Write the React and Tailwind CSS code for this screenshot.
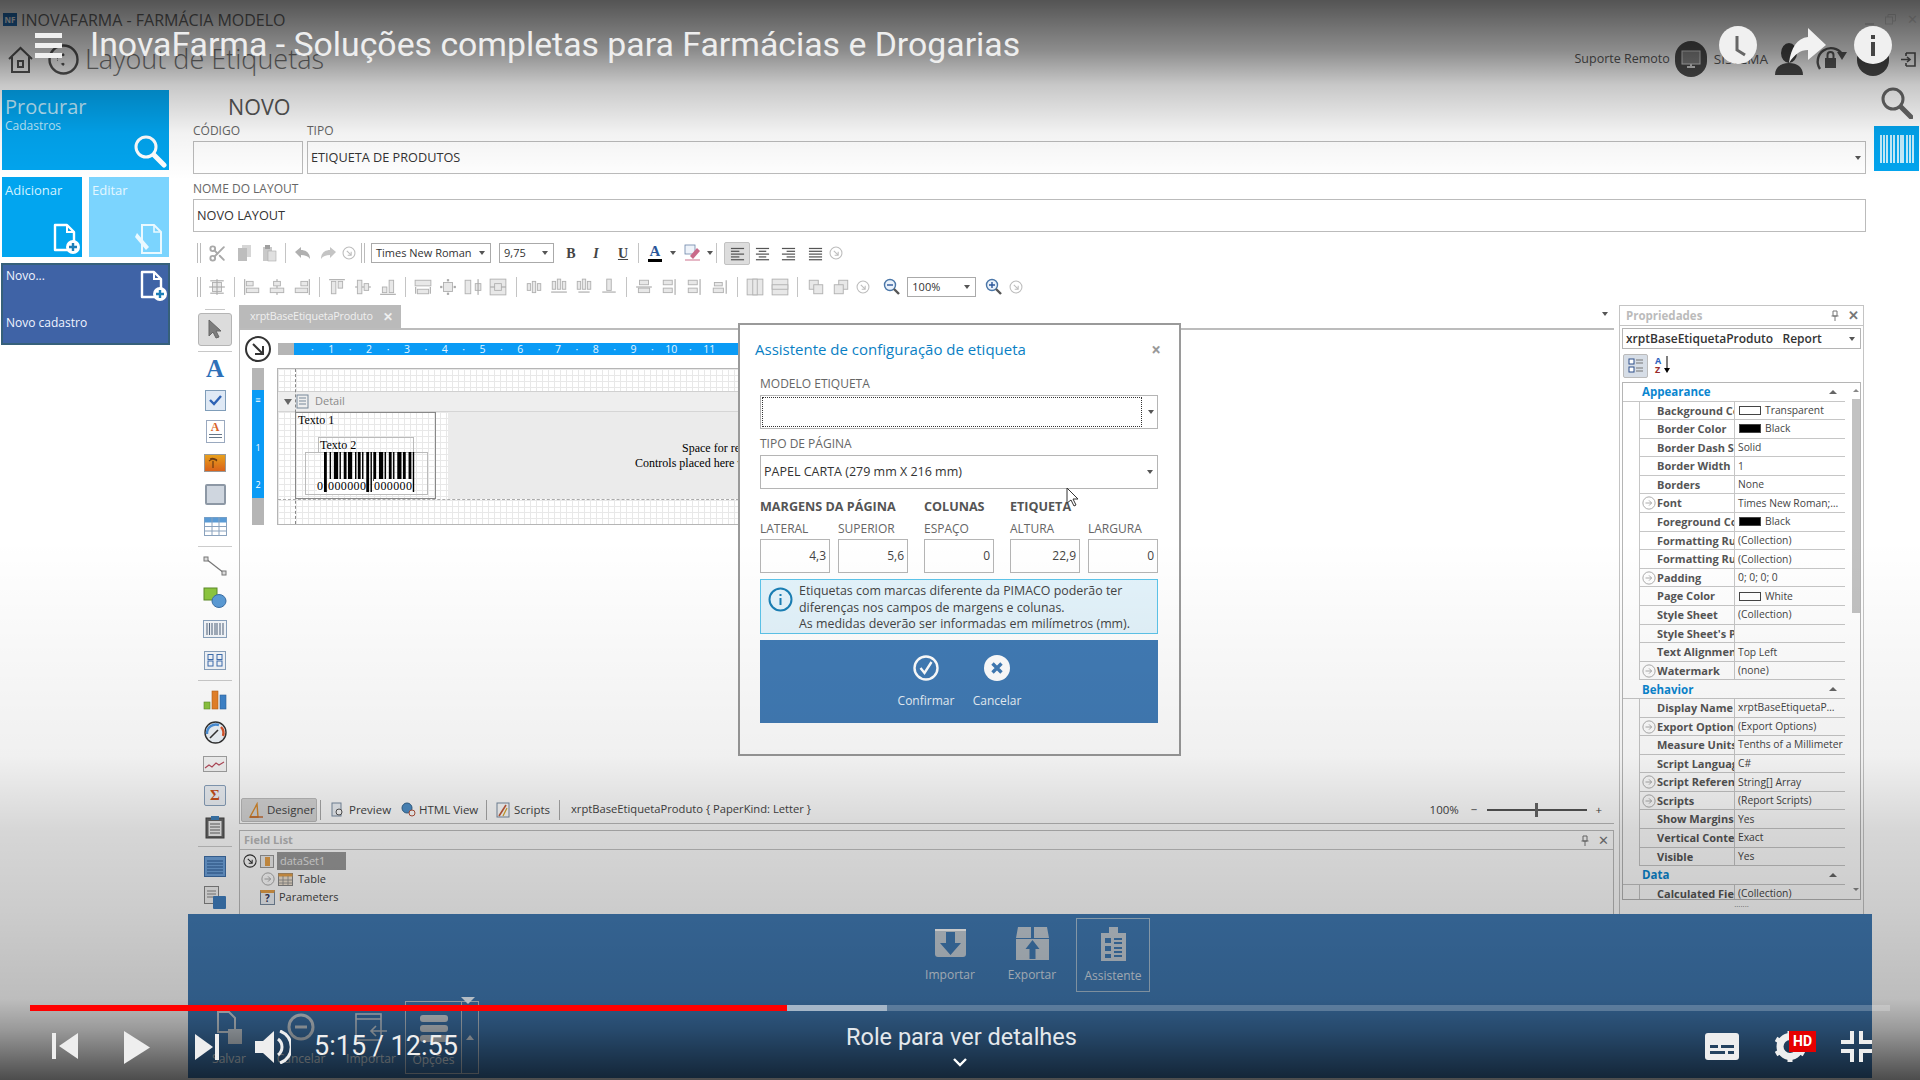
import React from 'react'
import { Scissors } from 'lucide-react'

const TOOLBAR_2 = [
  [[4, 4, 8, 8], [7.5, 1, 1, 14, 1], [1, 7.5, 14, 1, 1], [2, 2, 12, 1, 1], [2, 13, 12, 1, 1]],
  null,
  [[1, 1, 1, 14, 1], [3, 3, 6, 4], [3, 9, 11, 4]],
  [[7.5, 1, 1, 14, 1], [5, 3, 6, 4], [2, 9, 12, 4]],
  [[14, 1, 1, 14, 1], [7, 3, 6, 4], [2, 9, 11, 4]],
  null,
  [[1, 1, 14, 1, 1], [3, 3, 4, 11], [9, 3, 4, 6]],
  [[1, 7.5, 14, 1, 1], [3, 2, 4, 12], [9, 5, 4, 6]],
  [[1, 14, 14, 1, 1], [3, 8, 4, 5], [9, 2, 4, 11]],
  null,
  [[1, 2, 14, 5], [3, 10, 10, 4], [1, 8, 1, 6, 1], [14, 8, 1, 6, 1]],
  [[4, 4, 8, 8], [7, 1, 2, 2, 1], [7, 13, 2, 2, 1], [1, 7, 2, 2, 1], [13, 7, 2, 2, 1]],
  [[1, 2, 5, 12], [10, 5, 5, 6], [12, 1, 1, 14, 1]],
  [[1, 1, 14, 14], [5, 5, 6, 6], [1, 7.5, 4, 1, 1], [11, 7.5, 4, 1, 1]],
  null,
  [[2, 5, 3, 6], [6.5, 3, 3, 10], [11, 5, 3, 6]],
  [[2, 3, 3, 7], [6.5, 1, 3, 9], [11, 3, 3, 7], [1, 12, 14, 1, 1]],
  [[2, 3, 3, 7], [6.5, 1, 3, 9], [11, 3, 3, 7], [3, 12, 10, 1, 1]],
  [[6, 1, 4, 10], [2, 12, 12, 1, 1]],
  null,
  [[4, 2, 8, 4], [3, 9, 10, 4], [1, 7.5, 14, 1, 1]],
  [[2, 2, 8, 4], [2, 9, 8, 4], [12, 1, 1, 14, 1]],
  [[2, 2, 8, 4], [2, 9, 8, 4], [12, 1, 1, 14, 1]],
  [[3, 4, 7, 3], [2, 9, 9, 4], [13, 2, 1, 12, 1]],
  null,
  [[1, 1, 14, 14], [6, 1, 4, 14]],
  [[1, 1, 14, 14], [1, 6, 14, 4]],
  null,
  [[2, 2, 8, 8], [6, 6, 8, 8]],
  [[6, 2, 8, 8], [2, 6, 8, 8]],
]

const Tiny = ({ r }) => (
  <svg width="18" height="18" viewBox="0 0 16 16">
    {r.map(([x, y, w, h, solid], i) => (
      <rect key={i} x={x} y={y} width={w} height={h} fill={solid ? '#aaaaaa' : '#e8e8e8'} stroke={solid ? 'none' : '#b0b0b0'} strokeWidth="0.8" />
    ))}
  </svg>
)

const CircleArrow = ({ size = 14 }) => (
  <svg width={size} height={size} viewBox="0 0 16 16" fill="none" stroke="#bdbdbd" strokeWidth="1.2">
    <circle cx="8" cy="8" r="6.8" />
    <path d="M5.5 5.5 10.5 10.5M10.5 6.5v4h-4" />
  </svg>
)

const ExpandCircle = () => (
  <svg width="14" height="14" viewBox="0 0 16 16" fill="none" stroke="#a9a9a9" strokeWidth="1.1">
    <circle cx="8" cy="8" r="7" />
    <path d="M4 8h7M8 5l3 3-3 3" />
  </svg>
)

const Grip = () => (
  <div className="flex gap-[2px] h-[20px]">
    <div className="w-px bg-[#bbbbbb]" />
    <div className="w-px bg-[#bbbbbb]" />
  </div>
)

const Sep = () => <div className="w-px h-[20px] bg-[#c4c4c4]" />

const Caret = ({ className = '' }) => (
  <span className={`w-0 h-0 border-x-[3.5px] border-x-transparent border-t-[4px] border-t-[#555555] ${className}`} />
)

const DocPlus = ({ w = 28, h = 32 }) => (
  <svg width={w} height={h} viewBox="0 0 28 32" fill="none">
    <path d="M3 2h12l7 7v18H3z" stroke="#ffffff" strokeWidth="2.4" strokeLinejoin="round" />
    <path d="M15 2v7h7" stroke="#ffffff" strokeWidth="2" />
    <circle cx="21" cy="24" r="7" fill="#ffffff" />
    <path d="M21 20v8M17 24h8" stroke="#1d7fb8" strokeWidth="2.4" />
  </svg>
)

const Align = ({ type }) => {
  const lines = {
    left: [[1, 2, 14], [1, 5, 9], [1, 8, 14], [1, 11, 9], [1, 14, 14]],
    center: [[1, 2, 14], [4, 5, 8], [1, 8, 14], [4, 11, 8], [1, 14, 14]],
    right: [[1, 2, 14], [6, 5, 9], [1, 8, 14], [6, 11, 9], [1, 14, 14]],
    justify: [[1, 2, 14], [1, 5, 14], [1, 8, 14], [1, 11, 14], [1, 14, 14]],
  }[type]
  return (
    <svg width="15" height="15" viewBox="0 0 16 16">
      {lines.map(([x, y, w]) => <rect key={y} x={x} y={y} width={w} height="1.3" fill="#555555" />)}
    </svg>
  )
}

function Toolbar1() {
  return (
    <div className="flex items-center h-[34px] pl-[4px]">
      <Grip />
      <div className="ml-[2px] w-[28px] flex justify-center"><Scissors size={19} color="#a9a9a9" strokeWidth={2.4} /></div>
      <div className="w-[26px] flex justify-center">
        <svg width="15" height="18" viewBox="0 0 15 18"><rect x="5" y="1" width="9" height="12" fill="#d6d6d6" /><rect x="1" y="4" width="9" height="13" fill="#bdbdbd" /></svg>
      </div>
      <div className="w-[24px] flex justify-center">
        <svg width="15" height="18" viewBox="0 0 15 18"><rect x="1" y="3" width="9" height="14" fill="#c9c9c9" /><rect x="3" y="1" width="5" height="4" fill="#9f9f9f" /><rect x="6" y="7" width="8" height="10" fill="#e0e0e0" stroke="#aaaaaa" strokeWidth="0.6" /></svg>
      </div>
      <div className="ml-[4px] mr-[2px]"><Sep /></div>
      <div className="w-[28px] flex justify-center">
        <svg width="17" height="13" viewBox="0 0 17 13"><path d="M1 5 7 0v3c5 0 9 3 9 9-2-3-5-4-9-4v3z" fill="#b0b0b0" /></svg>
      </div>
      <div className="w-[24px] flex justify-center">
        <svg width="17" height="13" viewBox="0 0 17 13"><path d="M16 5 10 0v3c-5 0-9 3-9 9 2-3 5-4 9-4v3z" fill="#c4c4c4" /></svg>
      </div>
      <div className="w-[18px] flex justify-center"><CircleArrow /></div>
      <div className="ml-[3px]"><Grip /></div>
      <div className="ml-[6px] w-[120px] h-[20px] border border-[#aaaaaa] flex items-center justify-between pl-[4px] pr-[5px] text-[11px] text-[#333333]">
        <span>Times New Roman</span><Caret />
      </div>
      <div className="ml-[8px] w-[55px] h-[20px] border border-[#aaaaaa] flex items-center justify-between pl-[4px] pr-[5px] text-[11px] text-[#333333]">
        <span>9,75</span><Caret />
      </div>
      <div className="ml-[4px] w-[26px] text-center font-['Liberation_Serif',serif] font-bold text-[14px] text-[#444444]">B</div>
      <div className="w-[24px] text-center font-['Liberation_Serif',serif] font-bold italic text-[14px] text-[#444444]">I</div>
      <div className="w-[30px] text-center font-['Liberation_Serif',serif] font-bold underline text-[14px] text-[#444444]">U</div>
      <Sep />
      <div className="ml-[3px] w-[26px] flex flex-col items-center">
        <span className="font-['Liberation_Serif',serif] font-bold text-[15px] leading-[13px] text-[#2b579a]">A</span>
        <div className="w-[14px] h-[3px] bg-black mt-[1px]" />
      </div>
      <Caret className="ml-[2px]" />
      <div className="ml-[5px] w-[24px] flex justify-center">
        <svg width="18" height="18" viewBox="0 0 18 18"><rect x="1" y="1" width="10" height="9" fill="#eef3fa" stroke="#6b84a8" strokeWidth="0.8" /><path d="M6 12 13 4l3 3-7 8z" fill="#c96a8a" /><rect x="1" y="15" width="15" height="2" fill="#e6b8c6" /></svg>
      </div>
      <Caret className="ml-[2px]" />
      <div className="ml-[3px]"><Sep /></div>
      <div className="ml-[7px] w-[26px] h-[23px] bg-[#dddddd] border border-[#c2c2c2] rounded-[2px] flex items-center justify-center"><Align type="left" /></div>
      <div className="w-[25px] flex justify-center"><Align type="center" /></div>
      <div className="w-[27px] flex justify-center"><Align type="right" /></div>
      <div className="w-[26px] flex justify-center"><Align type="justify" /></div>
      <div className="w-[16px] flex justify-center"><CircleArrow /></div>
    </div>
  )
}

function Toolbar2() {
  return (
    <div className="flex items-center h-[34px] pl-[4px]">
      <Grip />
      <div className="w-[3px]" />
      {TOOLBAR_2.map((r, i) => r ? (
        <div key={i} className="w-[25.2px] flex justify-center"><Tiny r={r} /></div>
      ) : (
        <div key={i} className="w-[10px] flex justify-center"><Sep /></div>
      ))}
      <div className="w-[19px] flex justify-center"><CircleArrow /></div>
      <div className="ml-[7px] w-[25px] flex justify-center"><ZoomGlass sign="-" /></div>
      <div className="ml-[3px] w-[69px] h-[20px] border border-[#aaaaaa] flex items-center justify-between pl-[4px] pr-[5px] text-[11px] text-[#333333]">
        <span>100%</span><Caret />
      </div>
      <div className="ml-[5px] w-[25px] flex justify-center"><ZoomGlass sign="+" /></div>
      <div className="ml-[1px] w-[17px] flex justify-center"><CircleArrow /></div>
    </div>
  )
}

const ZoomGlass = ({ sign }) => (
  <svg width="18" height="18" viewBox="0 0 18 18" fill="none">
    <circle cx="7" cy="7" r="5.5" fill="#eaf2fb" stroke="#4a76a8" strokeWidth="1.4" />
    <path d="M11 11l5 5" stroke="#555555" strokeWidth="2.4" />
    <path d={sign === '+' ? 'M4 7h6M7 4v6' : 'M4 7h6'} stroke="#2b579a" strokeWidth="1.4" />
  </svg>
)

const STRIP_GROUPS = [
  [
    <span className="font-['Liberation_Serif',serif] font-bold text-[25px] leading-none text-[#2e70b8]">A</span>,
    <div className="w-[21px] h-[21px] border border-[#7f9db9] bg-[#dfe9f5] flex items-center justify-center">
      <svg width="15" height="13" viewBox="0 0 15 13" fill="none"><path d="M2 6l4 4 7-8" stroke="#2d62b5" strokeWidth="2.4" /></svg>
    </div>,
    <div className="w-[19px] h-[23px] border border-[#9aa9bf] bg-white flex flex-col items-center">
      <span className="font-['Liberation_Serif',serif] font-bold text-[12px] leading-[12px] text-[#d8642a]">A</span>
      <div className="w-[13px] h-px bg-[#667788] mt-[1px]" /><div className="w-[13px] h-px bg-[#667788] mt-[2px]" />
    </div>,
    <svg width="22" height="18" viewBox="0 0 22 18"><defs><linearGradient id="sunset" x1="0" y1="0" x2="0" y2="1"><stop offset="0" stopColor="#e8a21c" /><stop offset="1" stopColor="#d9601a" /></linearGradient></defs><rect x="0.5" y="0.5" width="21" height="17" fill="url(#sunset)" stroke="#999999" /><path d="M9 14V7M5 7c2-2 6-2 8 0M6 5c2-1 4-1 7 1" stroke="#6b3a12" strokeWidth="1.2" fill="none" /></svg>,
    <div className="w-[21px] h-[21px] border-2 border-[#8d98a5] rounded-[2px] bg-[#cfd6df]" />,
    <svg width="23" height="19" viewBox="0 0 23 19"><rect x="0.5" y="0.5" width="22" height="18" fill="#ffffff" stroke="#8aa2bd" /><rect x="0.5" y="0.5" width="22" height="5" fill="#5b9bd5" /><path d="M0 9.500h23M0 14h23M8 0v19M15 0v19" stroke="#8aa2bd" /></svg>,
  ],
  [
    <svg width="24" height="20" viewBox="0 0 24 20"><path d="M3 3l18 14" stroke="#777777" strokeWidth="1.2" /><rect x="1" y="1" width="4" height="4" fill="#dddddd" stroke="#777777" /><rect x="19" y="15" width="4" height="4" fill="#dddddd" stroke="#777777" /></svg>,
    <svg width="24" height="22" viewBox="0 0 24 22"><rect x="1" y="1" width="13" height="12" fill="#8cc63f" stroke="#5d8a28" /><ellipse cx="16" cy="14" rx="7" ry="6.5" fill="#5b9bd5" stroke="#3a6ea5" /></svg>,
    <svg width="24" height="18" viewBox="0 0 24 18"><rect x="0.5" y="0.5" width="23" height="17" fill="#f4f7fb" stroke="#8aa2bd" /><path d="M4 3v12M6.500 3v12M9 3v12M12 3v12M14 3v12M17 3v12M20 3v12" stroke="#5d6f86" strokeWidth="1.1" /></svg>,
    <svg width="22" height="19" viewBox="0 0 22 19"><rect x="0.5" y="0.5" width="21" height="18" fill="#f4f7fb" stroke="#8aa2bd" /><rect x="4" y="3.500" width="5" height="5" fill="none" stroke="#3f6fb0" /><rect x="4" y="10" width="5" height="5" fill="none" stroke="#3f6fb0" /><rect x="13" y="3.500" width="5" height="5" fill="none" stroke="#3f6fb0" /><rect x="13" y="10" width="5" height="5" fill="none" stroke="#3f6fb0" /></svg>,
  ],
  [
    <svg width="24" height="20" viewBox="0 0 24 20"><rect x="1" y="12" width="6" height="7" fill="#8cc63f" stroke="#5d8a28" strokeWidth="0.6" /><rect x="9" y="1" width="6" height="18" fill="#e8832a" stroke="#b5611a" strokeWidth="0.6" /><rect x="17" y="5" width="6" height="14" fill="#3f85cc" stroke="#2c639c" strokeWidth="0.6" /></svg>,
    <svg width="25" height="23" viewBox="0 0 25 23" fill="none"><circle cx="12.500" cy="11.500" r="10.500" fill="#eef4fa" stroke="#333333" strokeWidth="1.4" /><path d="M4 13a9 9 0 0 1 12-9" stroke="#4a90d9" strokeWidth="2.4" /><path d="M18 6a9 9 0 0 1 2 9" stroke="#d8542a" strokeWidth="2.4" /><path d="M7 17l8-8" stroke="#333333" strokeWidth="1.6" /></svg>,
    <svg width="24" height="16" viewBox="0 0 24 16" fill="none"><rect x="0.5" y="0.5" width="23" height="15" fill="#f7f7f7" stroke="#a3a3a3" /><path d="M2 12l4-3 3 2 4-4 3 2 5-3" stroke="#b54a5a" strokeWidth="1.1" /></svg>,
    <div className="w-[22px] h-[21px] border border-[#8aa2bd] rounded-[2px] bg-[#eef2f7] flex items-center justify-center text-[15px] font-bold leading-none text-[#c8501c] font-['Liberation_Serif',serif]">Σ</div>,
    <svg width="20" height="24" viewBox="0 0 20 24" fill="none"><rect x="1" y="3" width="18" height="20" fill="#666666" stroke="#444444" /><rect x="3.500" y="6" width="13" height="15" fill="#f2f2f2" /><rect x="6" y="1" width="8" height="4" fill="#3f7fb8" /><path d="M5 9h10M5 12h10M5 15h10M5 18h10" stroke="#666666" /></svg>,
  ],
  [
    <svg width="22" height="21" viewBox="0 0 22 21"><rect x="0.5" y="0.5" width="21" height="20" fill="#6fa3dc" stroke="#3f6fa8" /><path d="M3 5h16M3 8h16M3 11h16M3 14h16M3 17h16" stroke="#2d5b94" /></svg>,
    <svg width="23" height="24" viewBox="0 0 23 24"><rect x="0.5" y="0.5" width="14" height="17" fill="#f5f5f5" stroke="#888888" /><path d="M3 5h9M3 8h9M3 11h9" stroke="#888888" /><rect x="9" y="10" width="13" height="13" rx="1" fill="#3f7fc0" /></svg>,
  ],
]

function ToolStrip() {
  return (
    <div className="w-[44px] mr-[2px] shrink-0 flex flex-col items-center">
      <div className="w-[20px] h-px bg-[#c8c8c8] mt-[5px]" />
      <div className="mt-[3px] w-[34px] h-[33px] bg-[#dcdcdc] border border-[#b5b5b5] rounded-[3px] flex items-center justify-center">
        <svg width="16" height="20" viewBox="0 0 16 20"><path d="M2 1v16l4-4 3 6 3-1-3-6h5z" fill="#7d7d7d" stroke="#666666" /></svg>
      </div>
      <div className="w-[34px] h-px bg-[#c8c8c8] mt-[5px] mb-[1px]" />
      {STRIP_GROUPS.map((group, g) => (
        <React.Fragment key={g}>
          {g > 0 && (
            <div className="w-[34px] flex items-center h-[8px]"><div className="w-full h-px bg-[#cccccc]" /></div>
          )}
          {group.map((icon, i) => (
            <div key={i} className="w-[44px] h-[32px] flex items-center justify-center">{icon}</div>
          ))}
        </React.Fragment>
      ))}
    </div>
  )
}

const BARS = [2, 2, 1, 2, 3, 1, 1, 2, 2, 1, 3, 2, 1, 1, 2, 1, 1, 2, 2, 1, 1, 1, 2, 2, 3, 1, 1, 2, 2, 1, 1, 2, 3, 1, 2, 2, 2, 1, 1, 2]

function Barcode() {
  let x = 0
  const rects = []
  BARS.forEach((w, i) => {
    if (i % 2 === 0) {
      const guard = i < 2 || i > BARS.length - 4 || i === 20 || i === 18
      rects.push(<rect key={i} x={x} y="0" width={w} height={guard ? 40 : 29} fill="#000000" />)
    }
    x += w
  })
  return <svg width="93" height="40" viewBox="0 0 66 40" preserveAspectRatio="none">{rects}</svg>
}

const Ruler = () => (
  <div className="ml-[7px] mt-[13px] w-[464px] h-[12px] flex text-[10.500px] leading-[12px] text-[#e4f5ff] overflow-hidden">
    <div className="w-[16px] h-full bg-[#b5b5b5]" />
    <div className="flex-1 h-full bg-[#0a9bf5] flex pl-[9px]">
      {[1, 2, 3, 4, 5, 6, 7, 8, 9, 10, 11].map(n => (
        <React.Fragment key={n}>
          <span className="w-[18.9px] shrink-0 text-center">·</span>
          <span className="w-[18.9px] shrink-0 text-center">{n}</span>
        </React.Fragment>
      ))}
    </div>
  </div>
)

function ReportCanvas() {
  const grid = "bg-[linear-gradient(#e8e8e8_1px,transparent_1px),linear-gradient(90deg,#e8e8e8_1px,transparent_1px)] bg-[size:6px_6px]"
  return (
    <div className="flex h-[157px]">
      <div className="ml-[12px] w-[12px] h-full flex flex-col text-[9px] leading-none text-white text-center">
        <div className="h-[22px] bg-[#b5b5b5]" />
        <div className="relative h-[108px] bg-[#0a9bf5]">
          <span className="absolute left-0 w-full top-[5px]">≡</span>
          <span className="absolute left-0 w-full top-[53px]">1</span>
          <span className="absolute left-0 w-full top-[90px]">2</span>
        </div>
        <div className="flex-1 bg-[#b5b5b5]" />
      </div>
      <div className="relative ml-[13px] w-[463px] h-full border border-[#b5b5b5] font-['Liberation_Serif',serif] text-black overflow-hidden">
        <div className={`h-[23px] border-b border-[#d0d0d0] ${grid}`} />
        <div className="h-[20px] bg-[#eeeeee] border-b border-[#d5d5d5] flex items-center pl-[6px] font-['Open_Sans',sans-serif] text-[11px] text-[#8a8a8a]">
          <span className="w-0 h-0 border-x-[4px] border-x-transparent border-t-[6px] border-t-[#666666]" />
          <svg className="ml-[4px] mr-[6px]" width="13" height="15" viewBox="0 0 13 15" fill="none" stroke="#778899"><rect x="1" y="1" width="11" height="13" /><path d="M3 4h7M3 7h7M3 10h7" /></svg>
          Detail
        </div>
        <div className="flex h-[87px]">
          <div className={`w-[170px] h-full ${grid}`} />
          <div className="flex-1 bg-[#ebebeb] pt-[29px] pl-[171px] text-[12px] leading-[15px] whitespace-nowrap overflow-hidden">
            <div className="pl-[63px]">Space for report controls</div>
            <div className="pl-[16px]">Controls placed here will be printed</div>
          </div>
        </div>
        <div className={`h-[25px] border-t border-dashed border-[#aaaaaa] ${grid}`} />
        <div className="absolute left-[17px] top-0 h-full border-l border-dashed border-[#888888]" />
        <div className="absolute left-[17px] top-[43px] w-[141px] h-[87px] border border-[#888888]">
          <div className="absolute left-[2px] top-0 text-[12px] leading-[15px]">Texto 1</div>
          <div className="absolute left-[22px] top-[24px] w-[96px] h-[16px] border border-[#bbbbbb] text-[12px] leading-[14px] pl-[1px]">Texto 2</div>
          <div className="absolute left-[9px] top-[39px] w-[123px] h-[43px] border border-[#bbbbbb]" />
          <div className="absolute left-[28px] top-[39px]"><Barcode /></div>
          <div className="absolute left-[21px] top-[66px] text-[12px] leading-[15px] bg-white">0</div>
          <div className="absolute left-[32px] top-[66px] text-[12px] leading-[15px] bg-white tracking-[0.4px]">000000</div>
          <div className="absolute left-[78px] top-[66px] text-[12px] leading-[15px] bg-white tracking-[0.4px]">000000</div>
        </div>
      </div>
    </div>
  )
}

function DesignFooter() {
  return (
    <div className="mt-auto flex items-center h-[28px] pl-[1px] text-[11.5px] text-[#444444] border-b border-[#bcbcbc] shrink-0">
      <div className="w-[76px] h-[24px] bg-[#d6d6d6] border border-[#bdbdbd] rounded-[2px] flex items-center pl-[6px] gap-[3px]">
        <svg width="16" height="16" viewBox="0 0 16 16" fill="none"><path d="M2 15 9 2l1 13z" stroke="#d98a2b" strokeWidth="1.4" /><path d="M2 15h13" stroke="#c0652a" strokeWidth="1.4" /></svg>
        <span>Designer</span>
      </div>
      <div className="ml-[3px] h-[20px] w-px bg-[#aaaaaa]" />
      <div className="ml-[10px] flex items-center gap-[4px] w-[70px]">
        <svg width="14" height="16" viewBox="0 0 14 16" fill="none"><rect x="1" y="1" width="9" height="13" fill="#eef2f7" stroke="#7a8da3" /><circle cx="8" cy="10" r="3" fill="#ffffff" stroke="#555555" /></svg>
        <span>Preview</span>
      </div>
      <div className="flex items-center gap-[2px] w-[85px]">
        <svg width="16" height="16" viewBox="0 0 16 16" fill="none"><circle cx="6" cy="6" r="5" fill="#4f90c9" stroke="#33648f" /><circle cx="11" cy="11" r="3" fill="#ffffff" stroke="#b5533a" /></svg>
        <span>HTML View</span>
      </div>
      <div className="h-[20px] w-px bg-[#aaaaaa]" />
      <div className="ml-[9px] flex items-center gap-[4px] w-[63px]">
        <svg width="14" height="16" viewBox="0 0 14 16" fill="none"><rect x="1" y="1" width="12" height="14" fill="#ffffff" stroke="#7a8da3" /><path d="M3 14 10 3" stroke="#c25a3a" strokeWidth="1.6" /><path d="M7 14l4-8" stroke="#d9a72b" strokeWidth="1.2" /></svg>
        <span>Scripts</span>
      </div>
      <div className="h-[20px] w-px bg-[#aaaaaa]" />
      <span className="ml-[11px] text-[11.2px]">xrptBaseEtiquetaProduto {'{'} PaperKind: Letter {'}'}</span>
      <div className="ml-auto mr-[12px] flex items-center">
        <span>100%</span>
        <span className="ml-[12px]">−</span>
        <div className="relative ml-[10px] w-[100px] h-[2px] bg-[#555555]">
          <div className="absolute left-[48px] top-[-6px] w-[3px] h-[14px] bg-[#666666]" />
        </div>
        <span className="ml-[8px]">+</span>
      </div>
    </div>
  )
}

function FieldList() {
  return (
    <div className="mt-[6px] h-[84px] border-t border-x border-[#bcbcbc] flex flex-col text-[11px] text-[#444444] shrink-0">
      <div className="h-[19px] border-b border-[#c4c4c4] flex items-center justify-between pl-[4px] pr-[4px] font-bold text-[#bbbbbb] shrink-0">
        <span>Field List</span>
        <div className="flex items-center gap-[8px] text-[#777777] font-normal">
          <svg width="10" height="11" viewBox="0 0 10 11" fill="none" stroke="#777777"><path d="M3 1h4v5H3zM1.500 6h7M5 6v5" /></svg>
          <span className="text-[13px] leading-none">✕</span>
        </div>
      </div>
      <div className="flex flex-col pl-[3px] pt-[2px]">
        <div className="flex items-center h-[18px] gap-[3px]">
          <svg width="14" height="14" viewBox="0 0 16 16" fill="none" stroke="#333333" strokeWidth="1.2"><circle cx="8" cy="8" r="7" /><path d="M5.500 5.500l5 5M10.500 6.500v4h-4" /></svg>
          <div className="w-[14px] h-[13px] border border-[#999999] bg-[#eeeeee] flex items-center justify-center"><div className="w-[5px] h-[9px] bg-[#e6a14a]" /></div>
          <span className="w-[69px] h-[18px] bg-[#9a9a9a] text-[#e8e8e8] pl-[3px] leading-[18px]">dataSet1</span>
        </div>
        <div className="flex items-center h-[18px] pl-[18px] gap-[3px]">
          <ExpandCircle />
          <svg width="15" height="13" viewBox="0 0 15 13"><rect x="0.5" y="0.5" width="14" height="12" fill="#f1e4d2" stroke="#8a8a8a" /><rect x="0.5" y="0.5" width="14" height="3" fill="#e6a14a" /><path d="M5 3v10M10 3v10M0 7h15M0 10h15" stroke="#8a8a8a" strokeWidth="0.8" /></svg>
          <span className="ml-[2px]">Table</span>
        </div>
        <div className="flex items-center h-[18px] pl-[17px] gap-[4px]">
          <div className="w-[15px] h-[15px] border border-[#7a8da3] border-t-[3px] border-t-[#e6a14a] bg-[#eef2f7] text-center text-[10px] leading-[11px] font-bold text-[#333355]">?</div>
          <span>Parameters</span>
        </div>
      </div>
    </div>
  )
}

const Swatch = ({ black }) => (
  <span className={`inline-block w-[22px] h-[9px] border border-[#444444] mr-[4px] ml-[1px] shrink-0 ${black ? 'bg-black' : 'bg-white'}`} />
)

const APPEARANCE = [
  { n: 'Background Color', v: 'Transparent', s: 'white' },
  { n: 'Border Color', v: 'Black', s: 'black' },
  { n: 'Border Dash Style', v: 'Solid' },
  { n: 'Border Width', v: '1' },
  { n: 'Borders', v: 'None' },
  { n: 'Font', v: 'Times New Roman;…', e: true },
  { n: 'Foreground Color', v: 'Black', s: 'black' },
  { n: 'Formatting Rule Sheet', v: '(Collection)' },
  { n: 'Formatting Rules', v: '(Collection)' },
  { n: 'Padding', v: '0; 0; 0; 0', e: true },
  { n: 'Page Color', v: 'White', s: 'white' },
  { n: 'Style Sheet', v: '(Collection)' },
  { n: "Style Sheet's Path", v: '' },
  { n: 'Text Alignment', v: 'Top Left' },
  { n: 'Watermark', v: '(none)', e: true },
]

const BEHAVIOR = [
  { n: 'Display Name', v: 'xrptBaseEtiquetaP…' },
  { n: 'Export Options', v: '(Export Options)', e: true },
  { n: 'Measure Units', v: 'Tenths of a Millimeter' },
  { n: 'Script Language', v: 'C#' },
  { n: 'Script References', v: 'String[] Array', e: true },
  { n: 'Scripts', v: '(Report Scripts)', e: true },
  { n: 'Show Margins', v: 'Yes' },
  { n: 'Vertical Content', v: 'Exact' },
  { n: 'Visible', v: 'Yes' },
]

const PropRow = ({ row }) => (
  <div className="h-[18.6px] flex ml-[16px] w-[206px] border-b border-[#c6c6c6] border-l text-[11px] leading-[17px] shrink-0">
    <div className="relative w-[95px] border-r border-[#c6c6c6] pl-[17px] font-bold text-[#555555] overflow-hidden whitespace-nowrap">
      {row.e && <span className="absolute left-[2px] top-[2px]"><ExpandCircle /></span>}
      {row.n}
    </div>
    <div className="flex-1 pl-[3px] flex items-center text-[10.3px] text-[#444444] whitespace-nowrap overflow-hidden">
      {row.s && <Swatch black={row.s === 'black'} />}
      {row.v}
    </div>
  </div>
)

const PropSection = ({ title }) => (
  <div className="h-[18.5px] w-[222px] flex items-center justify-between pl-[19px] pr-[8px] border-b border-[#c6c6c6] text-[11.5px] font-bold text-[#0a86d0] shrink-0">
    <span>{title}</span>
    <span className="w-0 h-0 border-x-[4px] border-x-transparent border-b-[4px] border-b-[#666666]" />
  </div>
)

function PropertiesPanel() {
  return (
    <div className="ml-[5px] mt-[1px] w-[245px] h-[609px] border-x border-t border-[#c4c4c4] flex flex-col shrink-0 overflow-hidden">
      <div className="h-[20px] flex items-center justify-between pl-[6px] pr-[4px] border-b border-[#c4c4c4] text-[11.5px] font-bold text-[#bbbbbb] shrink-0">
        <span>Propriedades</span>
        <div className="flex items-center gap-[8px]">
          <svg width="10" height="11" viewBox="0 0 10 11" fill="none" stroke="#777777"><path d="M3 1h4v5H3zM1.500 6h7M5 6v5" /></svg>
          <span className="text-[13px] leading-none text-[#777777]">✕</span>
        </div>
      </div>
      <div className="mx-[2px] mt-[2px] h-[21px] border border-[#b5b5b5] flex items-center justify-between pl-[3px] pr-[5px] text-[12px] font-semibold text-[#333333] shrink-0">
        <span className="whitespace-pre">xrptBaseEtiquetaProduto   Report</span><Caret />
      </div>
      <div className="h-[33px] flex items-center pl-[3px] shrink-0">
        <div className="w-[25px] h-[24px] bg-[#d6dde6] border border-[#bbbbbb] rounded-[2px] flex items-center justify-center">
          <svg width="16" height="15" viewBox="0 0 16 15" fill="none"><rect x="1" y="1" width="5" height="5" fill="#ffffff" stroke="#2c4f8a" /><rect x="1" y="9" width="5" height="5" fill="#ffffff" stroke="#2c4f8a" /><path d="M8 2h7M8 5h7M8 10h7M8 13h7" stroke="#777777" /></svg>
        </div>
        <div className="relative ml-[7px] w-[15px] h-[20px] font-bold text-[9px] leading-[9px]">
          <span className="text-[#2b62c0]">A</span><br /><span className="text-[#9a2b2b]">Z</span>
          <svg className="absolute right-0 top-0" width="6" height="18" viewBox="0 0 6 18"><path d="M3 0v13" stroke="#000000" /><path d="M0 12h6l-3 5z" fill="#000000" /></svg>
        </div>
      </div>
      <div className="mx-[2px] h-[518px] border border-[#b5b5b5] flex shrink-0 overflow-hidden">
        <div className="w-[222px] flex flex-col shrink-0">
          <PropSection title="Appearance" />
          {APPEARANCE.map(row => <PropRow key={row.n} row={row} />)}
          <PropSection title="Behavior" />
          {BEHAVIOR.map(row => <PropRow key={row.n} row={row} />)}
          <PropSection title="Data" />
          <PropRow row={{ n: 'Calculated Fields', v: '(Collection)' }} />
        </div>
        <div className="ml-[6px] w-[9px] flex flex-col items-center pt-[6px]">
          <span className="w-0 h-0 border-x-[3px] border-x-transparent border-b-[3px] border-b-[#888888]" />
          <div className="mt-[7px] w-[8px] h-[214px] bg-[#c2c2c2]" />
          <span className="mt-auto mb-[8px] w-0 h-0 border-x-[3px] border-x-transparent border-t-[3px] border-t-[#888888]" />
        </div>
      </div>
      <div className="text-center text-[8px] leading-[10px] text-[#666666] mt-[1px]">·······</div>
    </div>
  )
}

const Tile = ({ className, children }) => <div className={`relative text-[12px] overflow-hidden ${className}`}>{children}</div>

function LeftTiles() {
  return (
    <div className="w-[193px] pl-[2px] flex flex-col shrink-0">
      <Tile className="w-[167px] h-[80px] bg-[#02a5ef] text-[#bcebff]">
        <div className="pl-[3px] pt-[2px] text-[20px] leading-[30px]">Procurar</div>
        <div className="pl-[3px] mt-[-3px] text-[12px] leading-[14px]">Cadastros</div>
        <svg className="absolute left-[131px] top-[44px]" width="34" height="34" viewBox="0 0 34 34" fill="none"><circle cx="13" cy="13" r="10" stroke="#ffffff" strokeWidth="3" /><path d="M21 21l10 10" stroke="#ffffff" strokeWidth="5" strokeLinecap="round" /></svg>
      </Tile>
      <div className="flex gap-[7px] mt-[7px]">
        <Tile className="w-[80px] h-[80px] bg-[#02a5ef] text-[#d4f2ff]">
          <div className="pl-[3px] pt-[5px] text-[13px] leading-[16px]">Adicionar</div>
          <div className="absolute left-[50px] top-[46px]"><DocPlus /></div>
        </Tile>
        <Tile className="w-[80px] h-[80px] bg-[#7bd4fe] text-[#e5f7ff]">
          <div className="pl-[3px] pt-[5px] text-[13px] leading-[16px]">Editar</div>
          <svg className="absolute left-[44px] top-[46px]" width="30" height="32" viewBox="0 0 30 32" fill="none"><path d="M9 2h12l7 7v21H9z" stroke="#eaf9ff" strokeWidth="2" /><path d="M21 2v7h7" stroke="#eaf9ff" strokeWidth="1.6" /><path d="M4 10 16 24l-3 3-11-13z" fill="#eaf9ff" /></svg>
        </Tile>
      </div>
      <Tile className="mt-[6px] w-[169px] h-[82px] ml-[-1px] bg-[#3f63a6] border-2 border-[#36607a] text-[#f0f4ff]">
        <div className="pl-[3px] pt-[3px] text-[12px] leading-[16px]">Novo...</div>
        <div className="absolute left-[3px] top-[50px] text-[12px] leading-[16px]">Novo cadastro</div>
        <div className="absolute left-[136px] top-[5px]"><DocPlus /></div>
      </Tile>
    </div>
  )
}

function TitleRows() {
  return (
    <>
      <div className="h-[40px] flex items-start pt-[13px] pl-[3px] shrink-0">
        <div className="w-[14px] h-[13px] bg-[#2470b8] text-white text-[8px] leading-[13px] text-center font-bold">NF</div>
        <span className="ml-[4px] text-[16px] leading-[14px] text-[#6b6b6b]">INOVAFARMA - FARMÁCIA MODELO</span>
        <div className="ml-auto flex items-center mr-[2px] gap-[11px] text-[#dddddd]">
          <div className="w-[9px] h-[2px] bg-[#dddddd] mt-[8px]" />
          <svg width="11" height="11" viewBox="0 0 11 11" fill="none" stroke="#dddddd"><rect x="0.5" y="3" width="7" height="7" /><path d="M3 3V0.500h7.500V7H8" /></svg>
          <span className="text-[13px] leading-[13px]">✕</span>
        </div>
      </div>
      <div className="h-[38px] flex items-center text-[#666666] shrink-0">
        <svg className="ml-[8px]" width="25" height="27" viewBox="0 0 25 27" fill="none" stroke="#555555" strokeWidth="2"><path d="M1 13 12.500 2 24 13M4 11v15h17V11" /><rect x="10" y="15" width="5" height="6" /></svg>
        <svg className="ml-[15px]" width="31" height="31" viewBox="0 0 31 31" fill="none"><circle cx="15.500" cy="15.500" r="14" stroke="#555555" strokeWidth="2.4" /><path d="M10 15.500 16 10M10 15.500 16 21" stroke="#555555" strokeWidth="2.4" /><path d="M10 10l12 5.500-12 5.500z" fill="#ffffff" /></svg>
        <span className="ml-[6px] text-[27px] leading-[38px] text-[#777777] font-light">Layout de Etiquetas</span>
        <div className="ml-auto flex items-center">
          <span className="text-[12.5px] text-[#5a5a5a]">Suporte Remoto</span>
          <div className="ml-[5px] w-[32px] h-[36px] rounded-full bg-[#4f4f4f] flex items-center justify-center">
            <svg width="20" height="19" viewBox="0 0 20 19" fill="none"><rect x="1" y="1" width="18" height="13" fill="#8a8a8a" stroke="#dddddd" /><path d="M6 17h8M10 14v3" stroke="#dddddd" strokeWidth="2" /></svg>
          </div>
          <span className="ml-[7px] text-[13.5px] text-[#5a5a5a]">SISTEMA</span>
          <svg className="ml-[7px]" width="28" height="32" viewBox="0 0 28 32" fill="#4a4a4a"><ellipse cx="14" cy="10" rx="8" ry="10" /><path d="M0 32c0-8 6-12 14-12s14 4 14 12z" /></svg>
          <svg className="ml-[12px]" width="32" height="31" viewBox="0 0 32 31" fill="none"><path d="M5 25A13 13 0 1 1 27 10" stroke="#5a5a5a" strokeWidth="2.4" /><path d="M22 8h10l-5 8z" fill="#5a5a5a" /><rect x="10" y="14" width="11" height="10" fill="#5a5a5a" /><path d="M12.500 14v-3a3 3 0 0 1 6 0v3" stroke="#5a5a5a" strokeWidth="2" /></svg>
          <div className="ml-[10px] w-[32px] h-[34px] rounded-full bg-[#4a4a4a]" />
          <svg className="ml-[11px] mr-[4px]" width="16" height="15" viewBox="0 0 16 15" fill="none" stroke="#555555" strokeWidth="1.6"><path d="M6 1h9v13H6M6 4V1M6 14v-3" /><path d="M1 7.500h9M7 5l3 2.500L7 10" /></svg>
        </div>
      </div>
      <div className="h-[12px] shrink-0" />
    </>
  )
}

function Form() {
  return (
    <div className="flex-1 min-w-0 flex flex-col">
      <div className="h-[34px] pl-[35px] text-[21.5px] leading-[34px] text-[#555555]">NOVO</div>
      <div className="flex gap-[4px] h-[17px] text-[12px] leading-[14px] text-[#666666]">
        <span className="w-[110px]">CÓDIGO</span><span>TIPO</span>
      </div>
      <div className="flex gap-[4px] h-[33px]">
        <div className="w-[110px] border border-[#bbbbbb]" />
        <div className="flex-1 border border-[#bbbbbb] flex items-center justify-between pl-[3px] pr-[4px] pt-[1px] text-[12.7px] text-[#333333]">
          <span>ETIQUETA DE PRODUTOS</span><Caret />
        </div>
      </div>
      <div className="h-[25px] pt-[8px] text-[12px] leading-[14px] text-[#666666]">NOME DO LAYOUT</div>
      <div className="h-[33px] border border-[#bbbbbb] flex items-center pl-[3px] pt-[1px] text-[12.7px] text-[#333333]">NOVO LAYOUT</div>
      <div className="h-[4px]" />
      <Toolbar1 />
      <Toolbar2 />
      <div className="flex h-[610px]">
        <ToolStrip />
        <div className="w-[1375px] flex flex-col shrink-0">
          <div className="h-[24px] flex items-end justify-between shrink-0">
            <div className="w-[162px] h-[23px] bg-[#bababa] flex items-center justify-between pl-[11px] pr-[8px] text-[10.8px] text-[#efefef]">
              <span className="tracking-[-0.2px]">xrptBaseEtiquetaProduto</span><span className="text-[12px] font-bold">✕</span>
            </div>
            <Caret className="mb-[12px] mr-[6px]" />
          </div>
          <div className="h-[496px] border-t-2 border-l border-[#bcbcbc] flex flex-col shrink-0">
            <div className="flex h-[38px] shrink-0">
              <svg className="ml-[5px] mt-[6px]" width="26" height="26" viewBox="0 0 26 26" fill="none" stroke="#333333" strokeWidth="2"><circle cx="13" cy="13" r="12" /><path d="M8 8l10 10M18 10v8h-8" /></svg>
              <Ruler />
            </div>
            <ReportCanvas />
            <DesignFooter />
          </div>
          <FieldList />
        </div>
        <PropertiesPanel />
      </div>
    </div>
  )
}

function RightColumn() {
  return (
    <div className="w-[46px] ml-[8px] flex flex-col items-start shrink-0">
      <svg className="ml-[6px] mt-[-3px]" width="33" height="32" viewBox="0 0 33 32" fill="none"><circle cx="13" cy="12" r="10" stroke="#666666" strokeWidth="3" /><path d="M21 20l10 10" stroke="#666666" strokeWidth="5" strokeLinecap="round" /></svg>
      <div className="mt-[7px] w-[45px] h-[45px] bg-[#02a5ef] flex items-center justify-center">
        <svg width="34" height="28" viewBox="0 0 34 28"><path d="M1 0v28M4 0v28M7 0v28M11 0v28M14 0v28M18 0v28M21 0v28M23 0v28M27 0v28M30 0v28M33 0v28" stroke="#e8fbff" strokeWidth="1.7" /></svg>
      </div>
    </div>
  )
}

const BarItem = ({ label, children, className = '' }) => (
  <div className={`flex flex-col items-center ${className}`}>
    <div className="h-[42px] flex items-center justify-center">{children}</div>
    <span className="text-[12px] leading-[16px] mt-[3px]">{label}</span>
  </div>
)

function BlueBar() {
  return (
    <div className="ml-[188px] w-[1684px] h-[164px] bg-[#417bb5] flex flex-col shrink-0 text-[#d3dee8]">
      <div className="flex pl-[726px] pt-[4px] h-[78px]">
        <BarItem label="Importar" className="w-[72px] pt-[4px]">
          <svg width="33" height="30" viewBox="0 0 33 30"><path d="M1 2h31v24a3 3 0 0 1-3 3H4a3 3 0 0 1-3-3z" fill="#c5cfd8" /><path d="M12 4h9v11h6L16.500 27 6 15h6z" fill="#417bb5" /><rect x="1" y="1" width="31" height="2" fill="#ffffff" /></svg>
        </BarItem>
        <BarItem label="Exportar" className="ml-[10px] w-[72px] pt-[4px]">
          <svg width="33" height="34" viewBox="0 0 33 34"><path d="M2 1h13v11H0zM18 1h13l2 11H18z" fill="#c5cfd8" /><rect x="0" y="13" width="33" height="21" fill="#c5cfd8" /><path d="M16.500 14l7 9h-4v10h-6V23h-4z" fill="#417bb5" /></svg>
        </BarItem>
        <BarItem label="Assistente" className="ml-[8px] w-[74px] h-[74px] border border-[#a8c0d4] pt-[4px]">
          <svg width="25" height="34" viewBox="0 0 25 34"><rect x="0" y="6" width="25" height="28" fill="#c5cfd8" /><rect x="8" y="0" width="9" height="7" fill="#c5cfd8" /><path d="M4 11h6v5H4zM4 19h6v5H4zM4 27h6v4H4zM13 11h8v2h-8zM13 15h8v2h-8zM13 20h8v2h-8zM13 24h8v2h-8zM13 28h8v2h-8z" fill="#417bb5" /></svg>
        </BarItem>
      </div>
      <div className="flex pl-[6px] pt-[9px] text-[#dbe3ea]">
        <BarItem label="Salvar" className="w-[70px] pt-[5px]">
          <svg width="26" height="34" viewBox="0 0 26 34" fill="none" stroke="#d5dee6" strokeWidth="2"><path d="M2 2h11l6 6v14H2z" /><rect x="13" y="20" width="12" height="13" fill="#d5dee6" /></svg>
        </BarItem>
        <BarItem label="Cancelar" className="ml-[2px] w-[70px] pt-[5px]">
          <svg width="28" height="28" viewBox="0 0 28 28" fill="none" stroke="#d5dee6" strokeWidth="3"><circle cx="14" cy="14" r="12" /><path d="M8 14h12" /></svg>
        </BarItem>
        <BarItem label="Importar" className="w-[70px] pt-[5px]">
          <svg width="33" height="28" viewBox="0 0 33 28" fill="none" stroke="#d5dee6" strokeWidth="1.6"><rect x="1" y="1" width="25" height="26" /><path d="M1 6h25M32 18H16M21 13l-5 5 5 5" /></svg>
        </BarItem>
        <BarItem label="Opções" className="ml-[-1px] w-[56px] h-[73px] border-l border-y border-[#c5d0da] pt-[5px]">
          <svg width="32" height="27" viewBox="0 0 32 27" fill="#dde4ea"><rect x="2" y="0" width="28" height="7" rx="3" /><rect x="2" y="10" width="28" height="7" rx="3" /><rect x="2" y="20" width="28" height="7" rx="3" /></svg>
        </BarItem>
        <div className="w-[18px] h-[73px] border border-[#c5d0da] flex items-center justify-center">
          <span className="w-0 h-0 border-x-[4px] border-x-transparent border-b-[5px] border-b-[#dde4ea]" />
        </div>
      </div>
    </div>
  )
}

function PlayerOverlay() {
  return (
    <>
      <div className="absolute left-0 top-0 w-full h-[180px] pointer-events-none bg-[linear-gradient(to_bottom,rgba(0,0,0,.67)_0%,rgba(0,0,0,.45)_28%,rgba(0,0,0,.22)_47%,rgba(0,0,0,.05)_74%,rgba(0,0,0,0)_100%)]" />
      <div className="absolute left-0 top-[540px] w-full h-[540px] pointer-events-none bg-[linear-gradient(to_bottom,rgba(0,0,0,0)_0%,rgba(0,0,0,.06)_40%,rgba(0,0,0,.16)_54%,rgba(0,0,0,.2)_68.5%,rgba(0,0,0,.26)_85%,rgba(0,0,0,.4)_90.7%,rgba(0,0,0,.7)_100%)]" />

      <div className="absolute left-[35px] top-[33px] flex flex-col gap-[5px]">
        <div className="w-[27px] h-[5px] bg-[#f0f0f0]" />
        <div className="w-[27px] h-[5px] bg-[#f0f0f0]" />
        <div className="w-[27px] h-[5px] bg-[#f0f0f0]" />
      </div>
      <div className="absolute left-[90px] top-[23px] font-['Roboto',sans-serif] text-[33.8px] leading-[44px] text-[#eeeeee] whitespace-nowrap">
        InovaFarma - Soluções completas para Farmácias e Drogarias
      </div>

      <div className="absolute left-[1719px] top-[26px] w-[38px] h-[38px] rounded-full bg-[#f0f0f0]">
        <svg width="38" height="38" viewBox="0 0 38 38" fill="none"><path d="M18 10v14l8 5" stroke="#666666" strokeWidth="3" /></svg>
      </div>
      <svg className="absolute left-[1788px] top-[28px]" width="38" height="36" viewBox="0 0 38 36"><path d="M20 0l18 17-18 15V22C12 22 7 26 1 35 3 20 9 10 20 9z" fill="#f2f2f2" /></svg>
      <div className="absolute left-[1854px] top-[26px] w-[38px] h-[38px] rounded-full bg-[#f0f0f0] flex flex-col items-center justify-center gap-[3px]">
        <div className="w-[4px] h-[4px] bg-[#444444]" />
        <div className="w-[4px] h-[14px] bg-[#444444]" />
      </div>

      <div className="absolute left-[30px] top-[1005px] w-[1860px] h-[6px] flex bg-[rgba(255,255,255,.22)]">
        <div className="w-[757px] bg-[#ff0000]" />
        <div className="w-[100px] bg-[rgba(255,255,255,.45)]" />
      </div>

      <span className="absolute left-[461px] top-[997px] w-0 h-0 border-x-[7px] border-x-transparent border-t-[7px] border-t-[#b5bdc4]" />
      <svg className="absolute left-[52px] top-[1033px]" width="26" height="26" viewBox="0 0 26 26" fill="#eeeeee"><rect x="0" y="0" width="4" height="26" /><path d="M26 0v26L7 13z" /></svg>
      <svg className="absolute left-[124px] top-[1031px]" width="26" height="33" viewBox="0 0 26 33" fill="#eeeeee"><path d="M0 0l26 16.500-26 16.500z" /></svg>
      <svg className="absolute left-[195px] top-[1034px]" width="24" height="26" viewBox="0 0 24 26" fill="#eeeeee"><path d="M0 0v26l18-13z" /><rect x="20" y="0" width="4" height="26" /></svg>
      <svg className="absolute left-[255px] top-[1030px]" width="36" height="34" viewBox="0 0 36 34" fill="none"><path d="M0 11h8L19 1v32L8 23H0z" fill="#eeeeee" /><path d="M23 9a10 10 0 0 1 0 16" stroke="#eeeeee" strokeWidth="3" /><path d="M25 1a17 17 0 0 1 0 32" stroke="#eeeeee" strokeWidth="3" /></svg>
      <div className="absolute left-[314px] top-[1028px] font-['Roboto',sans-serif] text-[27px] leading-[36px] text-[#eeeeee] whitespace-nowrap">5:15 / 12:55</div>

      <div className="absolute left-[846px] top-[1021px] font-['Roboto',sans-serif] text-[23.5px] leading-[32px] text-[#e4e8ec] whitespace-nowrap">Role para ver detalhes</div>
      <svg className="absolute left-[953px] top-[1058px]" width="14" height="9" viewBox="0 0 14 9" fill="none" stroke="#ffffff" strokeWidth="2.4"><path d="M1 1l6 6 6-6" /></svg>

      <svg className="absolute left-[1705px] top-[1033px]" width="34" height="27" viewBox="0 0 34 27"><rect width="34" height="27" rx="3" fill="#eeeeee" /><path d="M5 12h8v3H5zM16 12h13v3H16zM5 18h15v3H5zM23 18h6v3h-6z" fill="#24425f" /></svg>
      <svg className="absolute left-[1775px] top-[1031px]" width="30" height="31" viewBox="0 0 30 31" fill="none"><circle cx="15" cy="15.500" r="10" stroke="#eeeeee" strokeWidth="7" /><path d="M15 0v6M15 25v6M1 8l5 3M24 20l5 3M1 23l5-3M24 11l5-3" stroke="#eeeeee" strokeWidth="5" /></svg>
      <div className="absolute left-[1789px] top-[1031px] w-[27px] h-[21px] bg-[#e60000] text-white font-['Roboto',sans-serif] text-[14px] font-bold leading-[21px] text-center">HD</div>
      <svg className="absolute left-[1841px] top-[1031px]" width="31" height="31" viewBox="0 0 31 31" fill="none" stroke="#eeeeee" strokeWidth="4"><path d="M11 0v11H0M20 0v11h11M11 31V20H0M20 31V20h11" /></svg>
    </>
  )
}

function DialogField({ label, value }) {
  return (
    <div className="w-[70px] flex flex-col shrink-0">
      <span className="h-[22px] text-[12px] leading-[23px] text-[#666666]">{label}</span>
      <div className="h-[34px] border border-[#b5b5b5] flex items-center justify-end pr-[3px] text-[12px] text-[#444444]">{value}</div>
    </div>
  )
}

const DialogHeading = ({ children }) => (
  <div className="h-[20px] text-[12.6px] leading-[20px] font-bold text-[#555555] whitespace-nowrap">{children}</div>
)

function Dialog() {
  return (
    <div className="absolute left-[738px] top-[323px] w-[443px] h-[433px] bg-white border-2 border-[#9a9a9a] pl-[20px] pr-[21px] text-[#444444]">
      <div className="flex items-center justify-between h-[48px] ml-[-5px] mr-[-3px]">
        <span className="text-[15px] text-[#0a7fc4]">Assistente de configuração de etiqueta</span>
        <span className="text-[17px] font-bold leading-none text-[#999999]">×</span>
      </div>
      <div className="h-[22px] pt-[2px] text-[12px] leading-[18px] text-[#666666]">MODELO ETIQUETA</div>
      <div className="h-[34px] border border-[#b5b5b5] flex items-center pl-[1px] pr-[3px]">
        <div className="w-[380px] h-[30px] border border-dotted border-[#333333]" />
        <Caret className="ml-[6px]" />
      </div>
      <div className="h-[26px] pt-[7px] text-[12px] leading-[16px] text-[#666666]">TIPO DE PÁGINA</div>
      <div className="h-[34px] border border-[#b5b5b5] flex items-center justify-between pl-[3px] pr-[4px] text-[12.5px] text-[#333333]">
        <span>PAPEL CARTA (279 mm X 216 mm)</span><Caret />
      </div>
      <div className="mt-[8px] flex gap-[16px] h-[76px]">
        <div className="w-[148px] shrink-0">
          <DialogHeading>MARGENS DA PÁGINA</DialogHeading>
          <div className="flex gap-[8px]">
            <DialogField label="LATERAL" value="4,3" />
            <DialogField label="SUPERIOR" value="5,6" />
          </div>
        </div>
        <div className="w-[70px] shrink-0">
          <DialogHeading>COLUNAS</DialogHeading>
          <DialogField label="ESPAÇO" value="0" />
        </div>
        <div className="w-[148px] shrink-0">
          <DialogHeading>ETIQUETA</DialogHeading>
          <div className="flex gap-[8px]">
            <DialogField label="ALTURA" value="22,9" />
            <DialogField label="LARGURA" value="0" />
          </div>
        </div>
      </div>
      <div className="mt-[6px] h-[55px] bg-[#e3f3fb] border border-[#5cc4ea] flex pt-[3px] pl-[7px] text-[12.4px] leading-[16.5px] text-[#444444]">
        <svg className="mt-[4px] shrink-0" width="25" height="25" viewBox="0 0 25 25" fill="none" stroke="#1a7fb5" strokeWidth="2"><circle cx="12.500" cy="12.500" r="11" /><path d="M12.500 11v7M12.500 7v2" /></svg>
        <div className="ml-[6px] whitespace-nowrap">
          Etiquetas com marcas diferente da PIMACO poderão ter<br />
          diferenças nos campos de margens e colunas.<br />
          As medidas deverão ser informadas em milímetros (mm).
        </div>
      </div>
      <div className="mt-[6px] h-[83px] bg-[#417bb5] flex pl-[131px] pt-[15px] text-white">
        <div className="w-[70px] flex flex-col items-center">
          <svg width="26" height="26" viewBox="0 0 26 26" fill="none" stroke="#ffffff" strokeWidth="2.400"><circle cx="13" cy="13" r="11.500" /><path d="M7.500 13l4 5 7-11" /></svg>
          <span className="mt-[12px] text-[12px] leading-[16px] text-[#e8f1f8]">Confirmar</span>
        </div>
        <div className="w-[72px] flex flex-col items-center">
          <svg width="26" height="26" viewBox="0 0 26 26"><circle cx="13" cy="13" r="13" fill="#ffffff" /><path d="M8.500 8.500l9 9M17.500 8.500l-9 9" stroke="#417bb5" strokeWidth="3.400" /></svg>
          <span className="mt-[12px] text-[12px] leading-[16px] text-[#e8f1f8]">Cancelar</span>
        </div>
      </div>
    </div>
  )
}

export default function App() {
  return (
    <div className="relative w-[1920px] h-[1080px] overflow-hidden bg-white font-['Open_Sans',sans-serif]">
      <div className="flex flex-col h-full">
        <TitleRows />
        <div className="flex h-[824px] shrink-0">
          <LeftTiles />
          <div className="w-[1673px] flex"><Form /></div>
          <RightColumn />
        </div>
        <BlueBar />
      </div>
      <Dialog />
      <svg className="absolute left-[1066px] top-[487px]" width="13" height="20" viewBox="0 0 13 20"><path d="M1 1v15l4-3 3 6 2-1-3-6h5z" fill="#ffffff" stroke="#333333" /></svg>
      <PlayerOverlay />
    </div>
  )
}
